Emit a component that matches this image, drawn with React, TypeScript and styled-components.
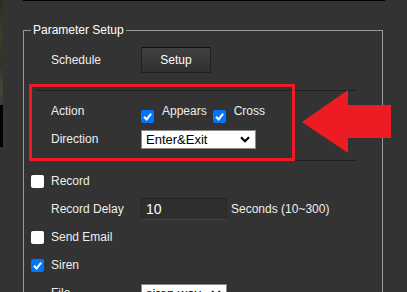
import React from 'react';
import styled, { createGlobalStyle } from 'styled-components';

const GlobalStyle = createGlobalStyle`
  html, body, #root {
    height: 100%;
  }

  body {
    margin: 0;
    overflow: hidden;
    background: #333333;
    color: #eeeeee;
    font-family: 'Liberation Sans', Arial, sans-serif;
    font-size: 12px;
  }
`;

const Checkbox = ({ checked, shift }: { checked?: boolean; shift?: boolean }) => (
  <Box $checked={checked} $shift={shift}>
    {checked && (
      <svg width="11" height="11" viewBox="0 0 11 11">
        <polyline points="2,5.8 4.6,8.4 9.2,2.6" fill="none" stroke="#fff" strokeWidth="2" />
      </svg>
    )}
  </Box>
);

const Dropdown = ({ width, value }: { width: number; value: string }) => (
  <SelectWrap $width={width}>
    <Select defaultValue={value}>
      <option>{value}</option>
    </Select>
    <Chevron viewBox="0 0 10 7">
      <polyline points="1,1.2 5,5.2 9,1.2" fill="none" stroke="#000" strokeWidth="2.2" />
    </Chevron>
  </SelectWrap>
);

const App = () => {
  return (
    <Page>
      <GlobalStyle />
      <CameraEdge>
        <EdgeImage />
        <EdgeBlack />
      </CameraEdge>
      <Main>
        <PreviewFrame />
        <Fieldset>
          <Legend>Parameter Setup</Legend>

          <Row $indent={27} $height={26} $top={10}>
            <Label>Schedule</Label>
            <Button>Setup</Button>
          </Row>

          <TriggerSection>
            <Row $indent={16}>
              <Label>Action</Label>
              <Options>
                <Checkbox checked shift />
                <OptionText>Appears</OptionText>
                <Checkbox checked shift />
                <OptionText>Cross</OptionText>
              </Options>
            </Row>
            <Row $indent={16}>
              <Label>Direction</Label>
              <Dropdown width={115} value="Enter&Exit" />
            </Row>
          </TriggerSection>

          <CheckRow>
            <Checkbox />
            <span>Record</span>
          </CheckRow>
          <Row $indent={27}>
            <Label>Record Delay</Label>
            <NumberInput defaultValue="10" />
            <Hint>Seconds (10~300)</Hint>
          </Row>
          <CheckRow>
            <Checkbox />
            <span>Send Email</span>
          </CheckRow>
          <CheckRow>
            <Checkbox checked />
            <span>Siren</span>
          </CheckRow>
          <Row $indent={27}>
            <Label>File</Label>
            <Dropdown width={86} value="siren.wav" />
          </Row>
        </Fieldset>
      </Main>

      <Highlight />
      <Arrow viewBox="0 0 92 67">
        <polygon points="2,34 48,2 48,17 91,17 91,50 48,50 48,65" fill="#ed1c24" />
      </Arrow>
    </Page>
  );
};

const Page = styled.div`
  position: relative;
  display: flex;
  height: 100%;
  overflow: hidden;
`;

const CameraEdge = styled.div`
  display: flex;
  flex: none;
  flex-direction: column;
  width: 3px;
`;

const EdgeImage = styled.div`
  height: 105px;
  background: linear-gradient(#2c2d24, #3c3d2d 35%, #30312a 60%, #45463a 85%, #3a3a30);
`;

const EdgeBlack = styled.div`
  height: 42px;
  background: #000;
`;

const Main = styled.div`
  display: flex;
  flex-direction: column;
  padding-left: 20px;
`;

const PreviewFrame = styled.div`
  box-sizing: border-box;
  width: 362px;
  height: 7px;
  border: 1px solid #000;
  border-top: none;
`;

const Fieldset = styled.fieldset`
  box-sizing: border-box;
  width: 360px;
  min-inline-size: auto;
  margin: 22px 0 0;
  padding: 0 0 20px;
  border: 1px solid #999999;
`;

const Legend = styled.legend`
  margin-left: 7px;
  padding: 0 2px;
  color: #ffffff;
  font-size: 12px;
  line-height: 14px;
`;

const Row = styled.div<{ $indent: number; $height?: number; $top?: number }>`
  display: flex;
  align-items: center;
  height: ${({ $height }) => $height ?? 28}px;
  margin-top: ${({ $top }) => $top ?? 0}px;
  padding-left: ${({ $indent }) => $indent}px;
`;

const Label = styled.span`
  flex: none;
  width: 90px;
  line-height: 14px;
`;

const Button = styled.button`
  box-sizing: border-box;
  width: 70px;
  height: 26px;
  margin: 0;
  padding: 0;
  border: 1px solid #202020;
  border-top-color: #111111;
  border-radius: 1px;
  background: linear-gradient(#414141, #303030);
  color: #ffffff;
  font: 12px 'Liberation Sans', Arial, sans-serif;
`;

const TriggerSection = styled.div`
  width: 321px;
  margin: 17px 0 6px 11px;
  padding: 6px 0 7px;
  border-top: 1px solid #1f1f1f;
  border-bottom: 1px solid #1f1f1f;
`;

const Options = styled.div`
  display: flex;
  align-items: center;
`;

const OptionText = styled.span`
  margin: 0 6px 0 8px;
  line-height: 14px;
`;

const Box = styled.span<{ $checked?: boolean; $shift?: boolean }>`
  display: inline-flex;
  flex: none;
  align-items: center;
  justify-content: center;
  box-sizing: border-box;
  width: 13px;
  height: 13px;
  margin-top: ${({ $shift }) => ($shift ? 11 : 0)}px;
  border-radius: 2px;
  background: ${({ $checked }) => ($checked ? '#0075ff' : '#ffffff')};
`;

const CheckRow = styled.div`
  display: flex;
  align-items: center;
  gap: 7px;
  height: 28px;
  padding-left: 7px;
  line-height: 14px;
`;

const NumberInput = styled.input`
  box-sizing: border-box;
  width: 86px;
  height: 22px;
  margin: 0;
  padding: 0 4px;
  border: 1px solid;
  border-color: #242424 #2a2a2a #464646;
  background: #2e2e2e;
  color: #ffffff;
  font: 14px 'Liberation Sans', Arial, sans-serif;
  outline: none;
`;

const Hint = styled.span`
  margin-left: 4px;
  line-height: 14px;
`;

const SelectWrap = styled.div<{ $width: number }>`
  position: relative;
  width: ${({ $width }) => $width}px;
  height: 19px;
`;

const Select = styled.select`
  appearance: none;
  box-sizing: border-box;
  width: 100%;
  height: 100%;
  margin: 0;
  padding: 0 0 0 4px;
  border: 1px solid #8a8a8a;
  border-radius: 0;
  background: #ffffff;
  color: #000000;
  font: 13px 'Liberation Sans', Arial, sans-serif;
`;

const Chevron = styled.svg`
  position: absolute;
  top: 6px;
  right: 6px;
  width: 10px;
  height: 7px;
  pointer-events: none;
`;

const Highlight = styled.div`
  position: absolute;
  top: 84px;
  left: 29px;
  box-sizing: border-box;
  width: 266px;
  height: 77px;
  border: 3px solid #ed1c24;
  pointer-events: none;
`;

const Arrow = styled.svg`
  position: absolute;
  top: 88px;
  left: 300px;
  width: 92px;
  height: 67px;
  pointer-events: none;
`;

export default App;
